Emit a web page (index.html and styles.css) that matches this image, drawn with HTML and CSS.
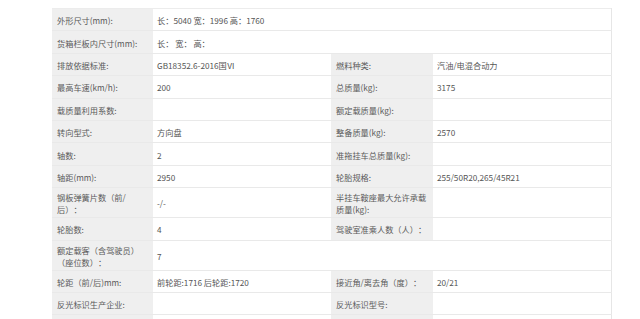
FILE: index.html
```html
<!DOCTYPE html>
<html lang="zh-CN">
<head>
<meta charset="utf-8">
<title>参数</title>
<link rel="stylesheet" href="styles.css">
</head>
<body>
<div class="page">
<table class="spec">
  <colgroup>
    <col class="c-label"><col class="c-value"><col class="c-label2"><col class="c-value">
  </colgroup>
  <tbody>
    <tr><td class="lb">外形尺寸(mm):</td><td class="vl" colspan="3">长：5040 宽：1996 高：1760</td></tr>
    <tr><td class="lb">货箱栏板内尺寸(mm):</td><td class="vl" colspan="3">长： 宽： 高：</td></tr>
    <tr><td class="lb">排放依据标准:</td><td class="vl">GB18352.6-2016国Ⅵ</td><td class="lb">燃料种类:</td><td class="vl">汽油/电混合动力</td></tr>
    <tr><td class="lb">最高车速(km/h):</td><td class="vl">200</td><td class="lb">总质量(kg):</td><td class="vl">3175</td></tr>
    <tr><td class="lb">载质量利用系数:</td><td class="vl"></td><td class="lb">额定载质量(kg):</td><td class="vl"></td></tr>
    <tr><td class="lb">转向型式:</td><td class="vl">方向盘</td><td class="lb">整备质量(kg):</td><td class="vl">2570</td></tr>
    <tr><td class="lb">轴数:</td><td class="vl">2</td><td class="lb">准拖挂车总质量(kg):</td><td class="vl"></td></tr>
    <tr><td class="lb">轴距(mm):</td><td class="vl">2950</td><td class="lb">轮胎规格:</td><td class="vl">255/50R20,265/45R21</td></tr>
    <tr><td class="lb">钢板弹簧片数（前/后）：</td><td class="vl">-/-</td><td class="lb">半挂车鞍座最大允许承载质量(kg):</td><td class="vl"></td></tr>
    <tr><td class="lb">轮胎数:</td><td class="vl">4</td><td class="lb">驾驶室准乘人数（人）：</td><td class="vl"></td></tr>
    <tr><td class="lb">额定载客（含驾驶员）（座位数）：</td><td class="vl" colspan="3">7</td></tr>
    <tr><td class="lb">轮距（前/后)mm:</td><td class="vl">前轮距:1716 后轮距:1720</td><td class="lb">接近角/离去角（度）：</td><td class="vl">20/21</td></tr>
    <tr><td class="lb">反光标识生产企业:</td><td class="vl"></td><td class="lb">反光标识型号:</td><td class="vl"></td></tr>
    <tr><td class="lb"></td><td class="vl"></td><td class="lb"></td><td class="vl"></td></tr>
  </tbody>
</table>
</div>
</body>
</html>
```

FILE: styles.css
```css
html, body {
  margin: 0;
  padding: 0;
  background: #ffffff;
}
.page {
  padding: 8px 0 0 52px;
}
.spec {
  border-collapse: collapse;
  table-layout: fixed;
  width: 559px;
  font-family: "Noto Sans CJK SC", "Noto Sans", sans-serif;
  font-size: 8.2px;
  line-height: 12px;
  color: #5a5a5a;
  text-spacing-trim: space-all;
  border-top: 1px solid #ececec;
  border-right: 1px solid #e6e6e6;
}
.c-label { width: 101px; }
.c-label2 { width: 102px; }
.c-value { width: 178px; }
.spec tr {
  height: 22.4px;
}
.spec td {
  padding: 3px 5px 2px 5px;
  border-bottom: 1px solid #e9e9e9;
  vertical-align: middle;
  text-align: left;
}
.spec td.lb {
  background: #efefef;
}
.spec td.vl {
  background: #ffffff;
  padding-left: 4px;
  color: #555555;
}
```
